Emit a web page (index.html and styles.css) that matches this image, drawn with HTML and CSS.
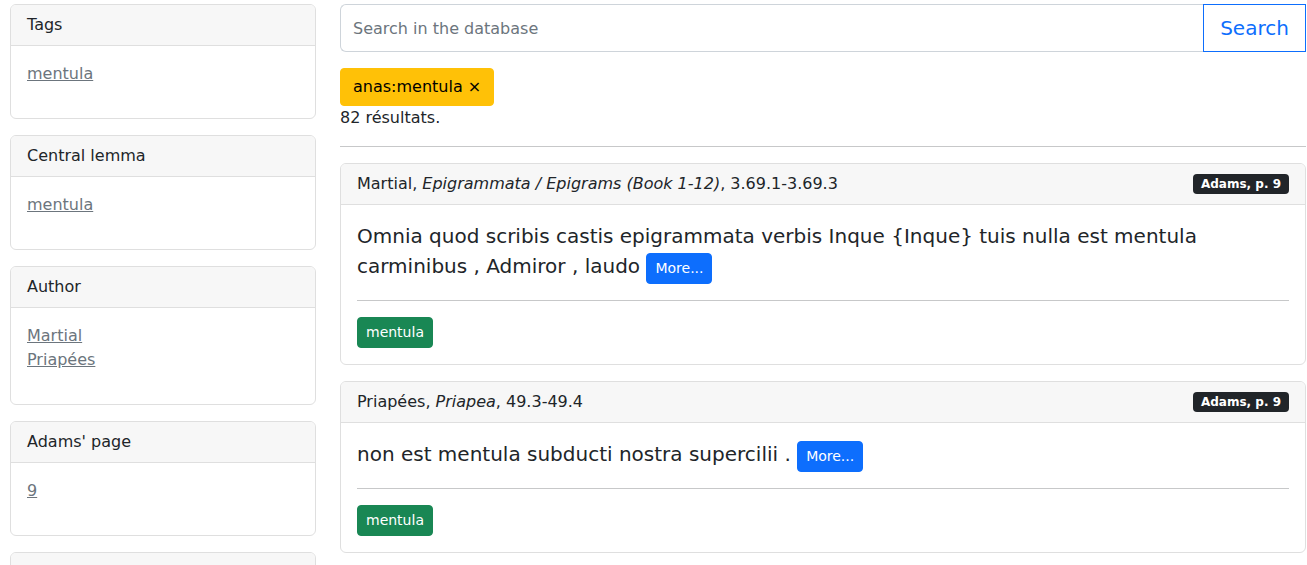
FILE: index.html
```html
<!DOCTYPE html>
<html lang="fr">
<head>
<meta charset="utf-8">
<title>Search</title>
<link rel="stylesheet" href="styles.css">
</head>
<body>
<div class="page">
  <aside class="sidebar">
    <div class="card">
      <div class="card-header">Tags</div>
      <div class="card-body">
        <ul class="links"><li><a href="#">mentula</a></li></ul>
      </div>
    </div>
    <div class="card">
      <div class="card-header">Central lemma</div>
      <div class="card-body">
        <ul class="links"><li><a href="#">mentula</a></li></ul>
      </div>
    </div>
    <div class="card">
      <div class="card-header">Author</div>
      <div class="card-body">
        <ul class="links"><li><a href="#">Martial</a></li><li><a href="#">Priapées</a></li></ul>
      </div>
    </div>
    <div class="card">
      <div class="card-header">Adams' page</div>
      <div class="card-body">
        <ul class="links"><li><a href="#">9</a></li></ul>
      </div>
    </div>
    <div class="card">
      <div class="card-header">Period</div>
      <div class="card-body">
        <ul class="links"><li><a href="#">Classical</a></li></ul>
      </div>
    </div>
  </aside>
  <main class="main">
    <form class="search-group">
      <input class="search-input" type="text" placeholder="Search in the database">
      <button class="search-btn" type="button">Search</button>
    </form>
    <div class="filters">
      <span class="filter-badge">anas:mentula ×</span>
    </div>
    <div class="count">82 résultats.</div>
    <hr class="sep">
    <div class="result card">
      <div class="card-header result-header">
        <span>Martial, <i>Epigrammata / Epigrams (Book 1-12)</i>, 3.69.1-3.69.3</span>
        <span class="ref-badge">Adams, p. 9</span>
      </div>
      <div class="card-body">
        <p class="passage">Omnia quod scribis castis epigrammata verbis Inque {Inque} tuis nulla est mentula carminibus , Admiror , laudo <a class="btn-more" href="#">More...</a></p>
        <hr class="sep">
        <a class="tag" href="#">mentula</a>
      </div>
    </div>
    <div class="result card">
      <div class="card-header result-header">
        <span>Priapées, <i>Priapea</i>, 49.3-49.4</span>
        <span class="ref-badge">Adams, p. 9</span>
      </div>
      <div class="card-body">
        <p class="passage">non est mentula subducti nostra supercilii . <a class="btn-more" href="#">More...</a></p>
        <hr class="sep">
        <a class="tag" href="#">mentula</a>
      </div>
    </div>
  </main>
</div>
</body>
</html>
```

FILE: styles.css
```css
* { box-sizing: border-box; }

body {
  margin: 0;
  font-family: "DejaVu Sans", sans-serif;
  font-size: 16px;
  line-height: 1.5;
  color: #212529;
  background: #fff;
}

.page {
  display: grid;
  grid-template-columns: 306px 966px;
  column-gap: 24px;
  padding: 4px 1px 0 10px;
  align-items: start;
}

.card {
  border: 1px solid #dfdfdf;
  border-radius: 6px;
  background: #fff;
  margin-bottom: 16px;
  overflow: hidden;
}

.card-header {
  padding: 8px 16px;
  background: #f7f7f7;
  border-bottom: 1px solid #dfdfdf;
}

.card-body {
  padding: 16px;
}

.links {
  list-style: none;
  margin: 0 0 16px;
  padding: 0;
}

.links a {
  color: #6c757d;
  text-decoration: underline;
}

.search-group {
  display: flex;
  margin: 0;
}

.search-input {
  flex: 1;
  height: 48px;
  border: 1px solid #ced4da;
  border-right: 0;
  border-radius: 6px 0 0 6px;
  padding: 0 12px;
  font-family: "DejaVu Sans", sans-serif;
  font-size: 16px;
  color: #212529;
  outline: none;
}

.search-input::placeholder {
  color: #6c757d;
}

.search-btn {
  width: 103px;
  height: 48px;
  border: 1px solid #0d6efd;
  background: #fff;
  color: #0d6efd;
  font-family: "DejaVu Sans", sans-serif;
  font-size: 20px;
  padding: 0 16px;
  border-radius: 0;
}

.filters {
  margin-top: 16px;
}

.filter-badge {
  display: inline-block;
  background: #ffc107;
  border: 1px solid #ffc107;
  color: #000;
  padding: 6px 12px;
  line-height: 24px;
  border-radius: 4px;
}

.sep {
  border: 0;
  border-top: 1px solid #212529;
  opacity: 0.25;
  margin: 16px 0;
}

.result-header {
  display: flex;
  justify-content: space-between;
  align-items: center;
}

.ref-badge {
  display: inline-block;
  background: #212529;
  color: #fff;
  font-size: 12px;
  font-weight: 700;
  line-height: 1;
  padding: 4px 8px;
  border-radius: 4px;
}

.passage {
  margin: 0;
  font-size: 20px;
  line-height: 30px;
}

.btn-more {
  display: inline-block;
  background: #0d6efd;
  color: #fff;
  border: 1px solid #0d6efd;
  border-radius: 4px;
  font-size: 14px;
  line-height: 21px;
  padding: 4px 8px;
  text-decoration: none;
}

.tag {
  display: inline-block;
  background: #198754;
  color: #fff;
  border: 1px solid #198754;
  border-radius: 4px;
  font-size: 14px;
  line-height: 21px;
  padding: 4px 8px;
  text-decoration: none;
}
```
